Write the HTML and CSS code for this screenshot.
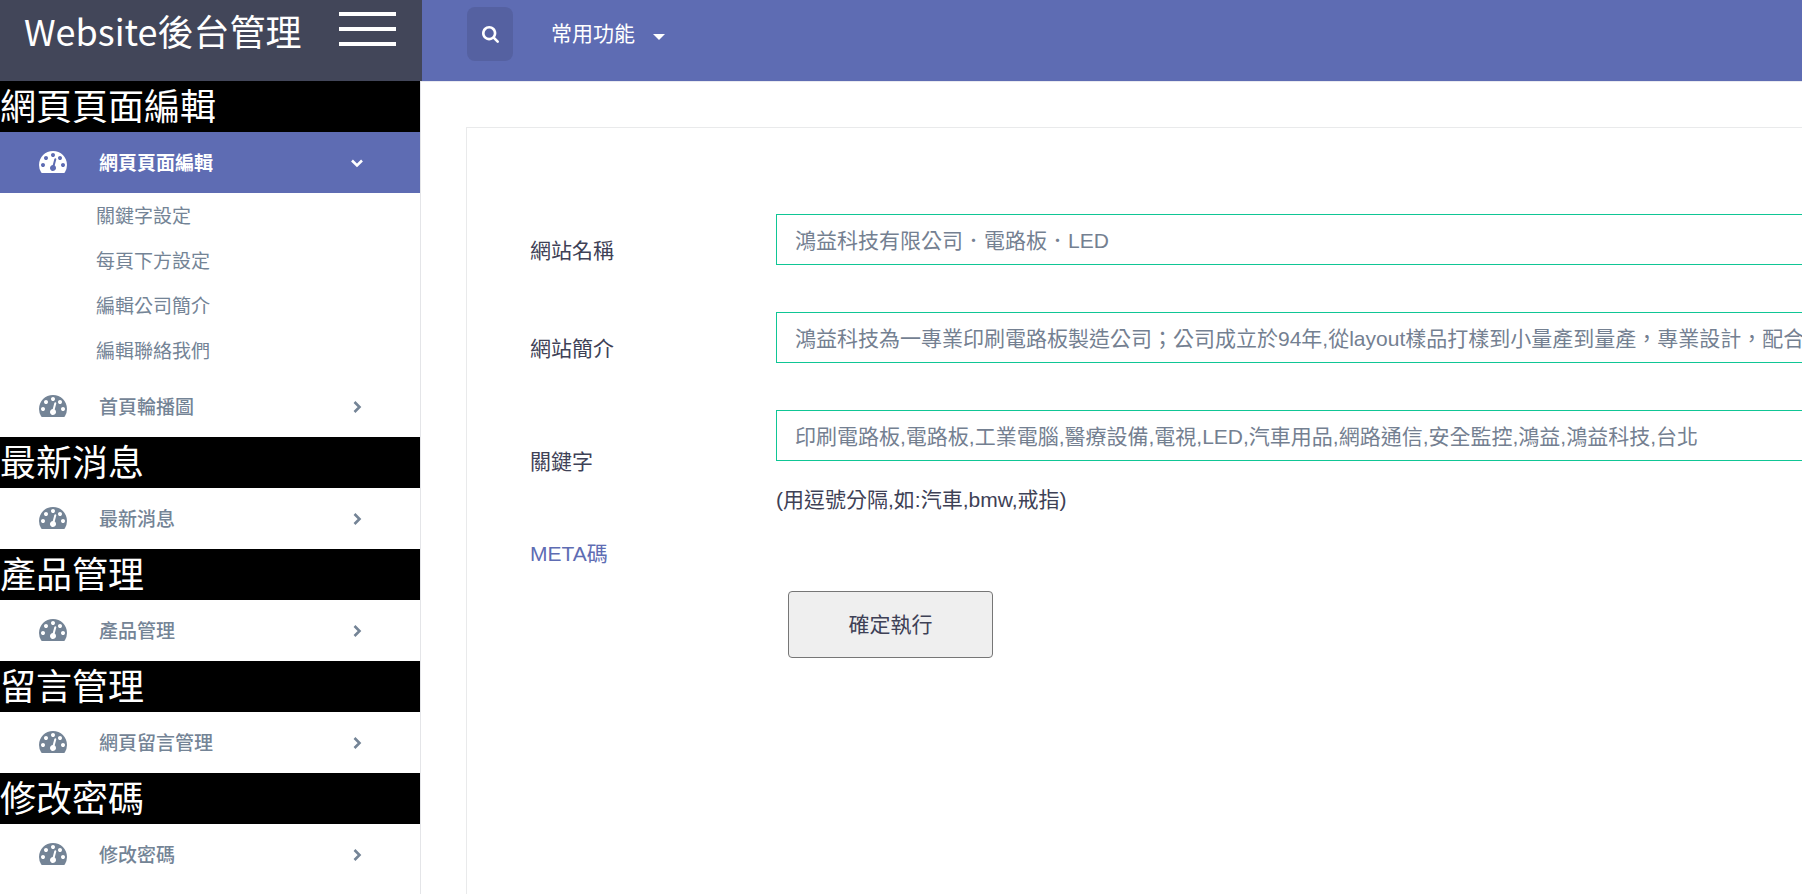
FILE: index.html
```html
<!DOCTYPE html>
<html lang="zh-Hant">
<head>
<meta charset="utf-8">
<meta name="viewport" content="width=device-width, initial-scale=1">
<title>Website後台管理</title>
<link rel="stylesheet" href="styles.css">
</head>
<body>
<svg class="sprite" aria-hidden="true">
  <symbol id="gauge" viewBox="0 256 1792 1408"><path d="M384 1152q0-53-37.5-90.5t-90.5-37.5-90.5 37.5-37.5 90.5 37.5 90.5 90.5 37.5 90.5-37.5 37.5-90.5zm192-448q0-53-37.5-90.5t-90.5-37.5-90.5 37.5-37.5 90.5 37.5 90.5 90.5 37.5 90.5-37.5 37.5-90.5zm428 481l101-382q6-26-7.5-48.5t-38.5-29.5-48 6.5-30 39.5l-101 382q-60 5-107 43.5t-63 98.5q-20 77 20 146t117 89 146-20 89-117q16-60-6-117t-72-91zm660-33q0-53-37.5-90.5t-90.5-37.5-90.5 37.5-37.5 90.5 37.5 90.5 90.5 37.5 90.5-37.5 37.5-90.5zm-640-640q0-53-37.5-90.5t-90.5-37.5-90.5 37.5-37.5 90.5 37.5 90.5 90.5 37.5 90.5-37.5 37.5-90.5zm448 192q0-53-37.5-90.5t-90.5-37.5-90.5 37.5-37.5 90.5 37.5 90.5 90.5 37.5 90.5-37.5 37.5-90.5zm320 448q0 261-141 483-19 29-54 29h-1402q-35 0-54-29-141-221-141-483 0-182 71-348t191-286 286-191 348-71 348 71 286 191 191 286 71 348z"/></symbol>
  <symbol id="chevron" viewBox="0 0 14 14"><path d="M4.5 2l5 5-5 5" fill="none" stroke="currentColor" stroke-width="2.6"/></symbol>
</svg>

<header class="header">
  <div class="brand">
    <a class="brand-name" href="#">Website後台管理</a>
    <button class="menu-toggle" type="button" aria-label="選單"><span></span><span></span><span></span></button>
  </div>
  <nav class="topnav">
    <button class="search" type="button" aria-label="搜尋">
      <svg viewBox="64 128 1664 1664"><path d="M1216 832q0-185-131.500-316.500t-316.500-131.500-316.500 131.500-131.500 316.500 131.500 316.500 316.500 131.500 316.500-131.500 131.500-316.500zm512 832q0 52-38 90t-90 38q-54 0-90-38l-343-342q-179 124-399 124-143 0-273.500-55.500t-225-150-150-225-55.500-273.500 55.500-273.500 150-225 225-150 273.500-55.500 273.500 55.500 225 150 150 225 55.500 273.500q0 220-124 399l343 343q37 37 37 90z"/></svg>
    </button>
    <button class="dropdown" type="button">常用功能<span class="caret"></span></button>
  </nav>
</header>

<div class="layout">
  <aside class="sidebar">
    <h2 class="section">網頁頁面編輯</h2>
    <a class="item active" href="#"><svg class="gauge"><use href="#gauge"/></svg><span>網頁頁面編輯</span><svg class="chevron"><use href="#chevron"/></svg></a>
    <ul class="submenu">
      <li><a href="#">關鍵字設定</a></li>
      <li><a href="#">每頁下方設定</a></li>
      <li><a href="#">編輯公司簡介</a></li>
      <li><a href="#">編輯聯絡我們</a></li>
    </ul>
    <a class="item" href="#"><svg class="gauge"><use href="#gauge"/></svg><span>首頁輪播圖</span><svg class="chevron"><use href="#chevron"/></svg></a>
    <h2 class="section">最新消息</h2>
    <a class="item" href="#"><svg class="gauge"><use href="#gauge"/></svg><span>最新消息</span><svg class="chevron"><use href="#chevron"/></svg></a>
    <h2 class="section">產品管理</h2>
    <a class="item" href="#"><svg class="gauge"><use href="#gauge"/></svg><span>產品管理</span><svg class="chevron"><use href="#chevron"/></svg></a>
    <h2 class="section">留言管理</h2>
    <a class="item" href="#"><svg class="gauge"><use href="#gauge"/></svg><span>網頁留言管理</span><svg class="chevron"><use href="#chevron"/></svg></a>
    <h2 class="section">修改密碼</h2>
    <a class="item" href="#"><svg class="gauge"><use href="#gauge"/></svg><span>修改密碼</span><svg class="chevron"><use href="#chevron"/></svg></a>
  </aside>

  <main class="main">
    <form class="card">
      <div class="row">
        <label for="site-name">網站名稱</label>
        <div class="field"><input id="site-name" type="text" value="鴻益科技有限公司．電路板．LED"></div>
      </div>
      <div class="row">
        <label for="site-intro">網站簡介</label>
        <div class="field"><input id="site-intro" type="text" value="鴻益科技為一專業印刷電路板製造公司；公司成立於94年,從layout樣品打樣到小量產到量產，專業設計，配合"></div>
      </div>
      <div class="row">
        <label for="keywords">關鍵字</label>
        <div class="field with-hint">
          <input id="keywords" type="text" value="印刷電路板,電路板,工業電腦,醫療設備,電視,LED,汽車用品,網路通信,安全監控,鴻益,鴻益科技,台北">
          <p class="hint">(用逗號分隔,如:汽車,bmw,戒指)</p>
        </div>
      </div>
      <div class="row meta"><a href="#">META碼</a></div>
      <div class="row"><button class="submit" type="submit">確定執行</button></div>
    </form>
  </main>
</div>
</body>
</html>
```

FILE: styles.css
```css
* { box-sizing: border-box; }

body {
  margin: 0;
  min-height: 100vh;
  display: flex;
  flex-direction: column;
  background: #fff;
  color: #3e4156;
  font: 21px/30px "Liberation Sans", "Noto Sans CJK TC", sans-serif;
}

a { color: inherit; text-decoration: none; }
button, input { font: inherit; }
.sprite { position: absolute; width: 0; height: 0; }

.header { display: flex; height: 81px; background: #5e6cb3; }

.brand {
  flex: none;
  width: 422px;
  padding: 0 26px 0 24px;
  display: flex;
  justify-content: space-between;
  align-items: flex-start;
  background: #424659;
  color: #fff;
}
.brand-name {
  padding-top: 4px;
  font: 400 36px/52px "Noto Sans CJK TC", sans-serif;
}
.menu-toggle {
  width: 57px;
  margin-top: 12px;
  padding: 0;
  border: 0;
  background: none;
  display: flex;
  flex-direction: column;
  gap: 11px;
}
.menu-toggle span { width: 100%; height: 4px; background: #fff; }

.topnav {
  display: flex;
  align-items: flex-start;
  gap: 38px;
  padding: 7px 0 0 45px;
}
.search {
  display: grid;
  place-items: center;
  width: 46px;
  height: 54px;
  border: 0;
  border-radius: 8px;
  background: #5561a1;
}
.search svg { width: 17px; height: 17px; fill: #fff; }
.dropdown {
  display: flex;
  align-items: center;
  gap: 18px;
  height: 54px;
  padding: 0;
  border: 0;
  background: none;
  color: #fff;
}
.caret {
  margin-top: 6px;
  border: 6px solid transparent;
  border-top-color: #fff;
  border-bottom: 0;
}

.layout { flex: 1; display: flex; }

.sidebar {
  flex: none;
  width: 421px;
  border-right: 1px solid #e4e5e8;
  color: #748496;
  font: 19px/27px "Noto Sans CJK TC", sans-serif;
}
.section {
  margin: 0;
  padding-bottom: 4px;
  background: #000;
  color: #fff;
  font-size: 36px;
  font-weight: 400;
  line-height: 47px;
}
.item {
  display: flex;
  align-items: center;
  height: 61px;
  padding: 0 56px 2px 39px;
  font-weight: 500;
}
.item span { flex: 1; padding-left: 32px; }
.gauge { width: 28px; height: 22px; fill: currentColor; }
.chevron { width: 14px; height: 14px; margin-top: 2px; }
.active { background: #5e6cb3; color: #fff; font-weight: 700; }
.active .chevron { transform: rotate(90deg); }
.submenu { margin: 0; padding: 0 0 3px 96px; list-style: none; }
.submenu a { display: block; padding-bottom: 2px; line-height: 43px; }

.main {
  flex: 1;
  min-width: 0;
  padding: 45px 0 0 45px;
  border-top: 1px solid #e9eaf0;
  display: flex;
}
/* The card bleeds off the right edge, so nothing closes on that side. */
.card {
  flex: 1;
  min-width: 0;
  padding: 74px 0 74px 63px;
  border: 1px solid #e9eaeb;
  border-width: 1px 0 0 1px;
}
.row { display: grid; grid-template-columns: 246px 1fr; align-items: center; }
.field { padding: 12px 0 35px; }
.field input {
  display: block;
  width: 100%;
  height: 51px;
  padding: 0 0 2px 18px;
  border: 1px solid #0fc695;
  border-right: 0;
  border-radius: 0;
  background: #fff;
  color: #748091;
}
.with-hint { padding-bottom: 10px; }
.hint { margin: 24px 0 0; }
.meta { height: 58px; color: #5e6cb3; }
.submit {
  grid-column: 2;
  width: 205px;
  height: 67px;
  margin: 8px 12px;
  border: 1px solid #767676;
  border-radius: 4px;
  background: #efefef;
  color: inherit;
}
```
